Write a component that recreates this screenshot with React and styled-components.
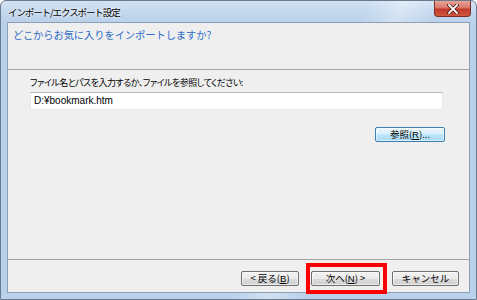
import React from 'react';
import styled, { createGlobalStyle } from 'styled-components';

const Global = createGlobalStyle`
  html, body { margin: 0; padding: 0; background: #ffffff; }
  body { font-family: "Noto Sans CJK JP", "Noto Sans", sans-serif; }
`;

const Window = styled.div`
  box-sizing: border-box;
  width: 477px;
  height: 300px;
  display: flex;
  flex-direction: column;
  border: 1px solid #6a7a8c;
  border-radius: 6px 6px 0 0;
  overflow: hidden;
  background:
    linear-gradient(115deg, rgba(255,255,255,0) 60%, rgba(255,255,255,0.35) 66%, rgba(255,255,255,0) 72%),
    linear-gradient(180deg, #d3e2f3 0px, #c4d8ee 10px, #b9d1ea 22px, #b9d1ea 100%);
`;

const TitleBar = styled.div`
  height: 21px;
  display: flex;
  align-items: flex-start;
  justify-content: space-between;
`;

const Title = styled.span`
  margin: 4px 0 0 7px;
  font-size: 9.5px;
  letter-spacing: -1.1px;
  line-height: 14px;
  color: #000;
  text-shadow: 0 0 5px rgba(255,255,255,0.95), 0 0 2px rgba(255,255,255,0.9);
`;

const CloseButton = styled.div`
  box-sizing: border-box;
  width: 37px;
  height: 16px;
  margin-right: 5px;
  border: 1px solid #7d2f28;
  border-top: none;
  border-radius: 0 0 4px 4px;
  background: linear-gradient(180deg, #e8a496 0%, #d9776a 45%, #c2392a 55%, #cf5a3f 100%);
  display: flex;
  align-items: center;
  justify-content: center;
`;

const Client = styled.div`
  flex: 1;
  margin: 0 6px 6px 6px;
  border: 1px solid #8ea0b6;
  background: #efefef;
  display: flex;
  flex-direction: column;
`;

const Header = styled.div`
  height: 47px;
  box-sizing: border-box;
  padding: 4px 0 0 5px;
  border-bottom: 1px solid #a3a3a3;
  font-size: 10.3px;
  letter-spacing: -0.1px;
  line-height: 16px;
  color: #2e6cc8;
`;

const Body = styled.div`
  flex: 1;
  display: flex;
  flex-direction: column;
  padding: 6px 24px 0 22px;
`;

const Label = styled.div`
  font-size: 9px;
  letter-spacing: -0.5px;
  font-feature-settings: "palt";
  line-height: 14px;
  color: #000;
`;

const TextBox = styled.div`
  box-sizing: border-box;
  height: 18px;
  margin: 2px 2px 0 0;
  padding-left: 3px;
  background: #fff;
  border: 1px solid #e3e9ef;
  border-top-color: #b8b3bd;
  font-family: "Liberation Sans", "Noto Sans CJK JP", sans-serif;
  font-size: 10px;
  line-height: 15px;
  color: #000;
`;

const BrowseRow = styled.div`
  display: flex;
  justify-content: flex-end;
  margin-top: 17px;
`;

const Button = styled.div`
  box-sizing: border-box;
  width: ${p => p.$w}px;
  height: 15px;
  border: 1px solid ${p => (p.$focused ? '#3c7fb1' : '#707070')};
  border-radius: 2px;
  background: ${p =>
    p.$focused
      ? 'linear-gradient(180deg, #eaf6fd 0%, #d9f0fc 50%, #bee6fd 50%, #a7d9f5 100%)'
      : 'linear-gradient(180deg, #f2f2f2 0%, #ebebeb 50%, #dddddd 50%, #cfcfcf 100%)'};
  box-shadow: inset 0 0 0 1px rgba(255,255,255,0.6);
  display: flex;
  align-items: center;
  justify-content: center;
  font-size: 9.5px;
  line-height: 13px;
  color: #000;
  white-space: nowrap;
`;

const Key = styled.span`
  text-decoration: underline;
  font-family: "Liberation Sans", sans-serif;
`;

const Footer = styled.div`
  height: 33px;
  box-sizing: border-box;
  border-top: 1px solid #a3a3a3;
  display: flex;
  justify-content: flex-end;
  align-items: flex-start;
  padding: 11px 10px 0 0;
  gap: 12px;
`;

const Highlight = styled.div`
  position: relative;
  &::after {
    content: "";
    position: absolute;
    top: -8px;
    bottom: -8px;
    left: -5px;
    right: -7px;
    border: 4px solid #ff0000;
    pointer-events: none;
  }
`;

const CloseGlyph = () => (
  <svg width="12" height="10" viewBox="0 0 12 10">
    <path d="M2 1 L10 9 M10 1 L2 9" stroke="#4a1a14" strokeWidth="3.4" strokeLinecap="square" />
    <path d="M2 1 L10 9 M10 1 L2 9" stroke="#ffffff" strokeWidth="1.8" strokeLinecap="square" />
  </svg>
);

export default function App() {
  return (
    <>
      <Global />
      <Window>
        <TitleBar>
          <Title>インポート/エクスポート設定</Title>
          <CloseButton><CloseGlyph /></CloseButton>
        </TitleBar>
        <Client>
          <Header>どこからお気に入りをインポートしますか?</Header>
          <Body>
            <Label>ファイル名とパスを入力するか、ファイルを参照してください:</Label>
            <TextBox>D:¥bookmark.htm</TextBox>
            <BrowseRow>
              <Button $w={70} $focused>参照(<Key>R</Key>)...</Button>
            </BrowseRow>
          </Body>
          <Footer>
            <Button $w={58}>&lt; 戻る(<Key>B</Key>)</Button>
            <Highlight>
              <Button $w={69}>次へ(<Key>N</Key>) &gt;</Button>
            </Highlight>
            <Button $w={67}>キャンセル</Button>
          </Footer>
        </Client>
      </Window>
    </>
  );
}
